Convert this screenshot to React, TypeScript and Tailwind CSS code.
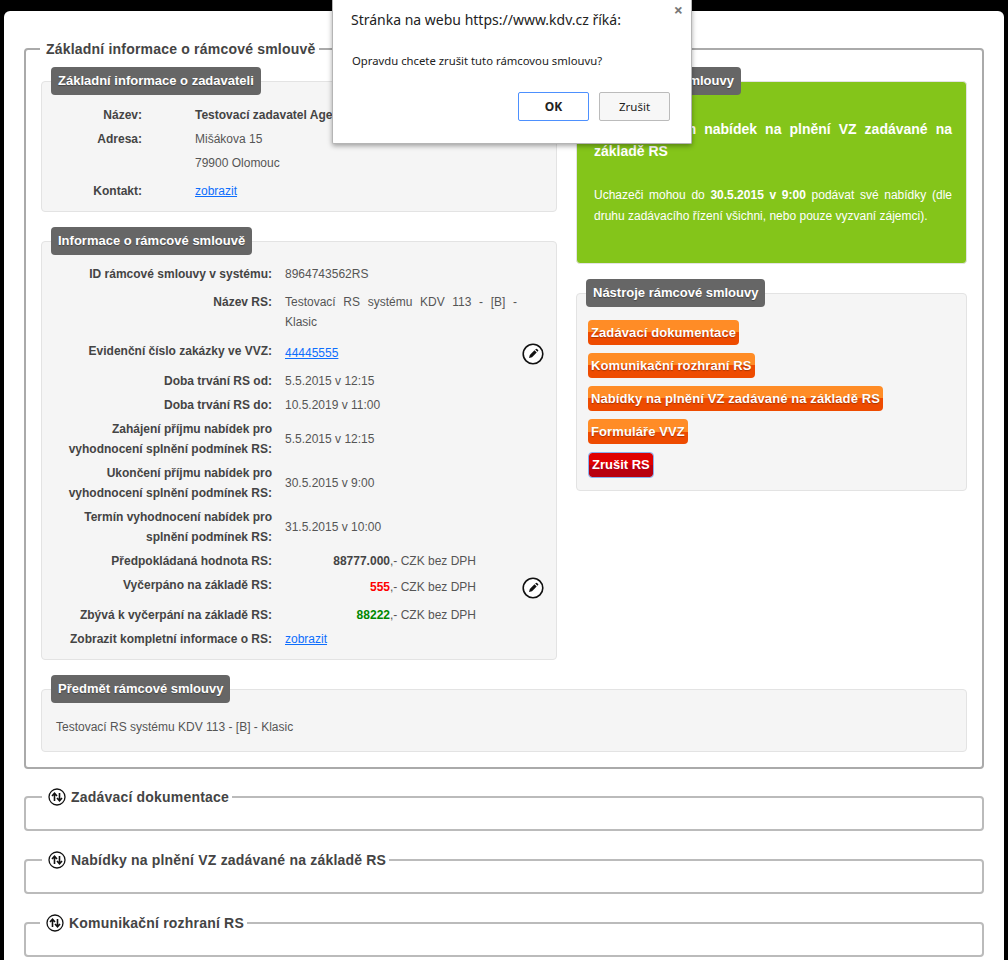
const BTN_ORANGE = 'bg-[linear-gradient(#ff8c26_0,#ff8c26_50%,#ee4b00_50%,#ee4b00_100%)]';

function PencilIcon() {
  return (
    <svg width="22" height="22" viewBox="0 0 22 22" className="block">
      <circle cx="11" cy="11" r="9.8" fill="#fff" stroke="#111" strokeWidth="1.6" />
      <path d="M7 15l.8-3 4.7-4.7 2.2 2.2L10 14.2z" fill="#111" />
      <path d="M13.2 6.6l.7-.7a.8.8 0 0 1 1.1 0l1.1 1.1a.8.8 0 0 1 0 1.1l-.7.7z" fill="#111" />
    </svg>
  );
}

function ToggleIcon() {
  return (
    <svg width="18" height="18" viewBox="0 0 18 18" className="block shrink-0">
      <circle cx="9" cy="9" r="8" fill="#fff" stroke="#111" strokeWidth="1.3" />
      <path d="M6.5 13V5.5M4 8l2.5-2.7L9 8" fill="none" stroke="#111" strokeWidth="1.6" />
      <path d="M11.5 5v7.5M9 10l2.5 2.7L14 10" fill="none" stroke="#111" strokeWidth="1.6" />
    </svg>
  );
}

function PanelTitle({ children }: { children: React.ReactNode }) {
  return (
    <div className="-mt-[15px] ml-[9px] h-[28px] w-fit rounded-[4px] bg-[#666] px-[7px] text-[13px] leading-[27px] font-bold text-white [text-shadow:0_1px_1px_rgba(0,0,0,0.35)]">
      {children}
    </div>
  );
}

function Panel({ title, children, className }: { title: string; children: React.ReactNode; className: string }) {
  return (
    <div className={`rounded-[4px] border border-[#e3e3e3] bg-[#f5f5f5] ${className}`}>
      <PanelTitle>{title}</PanelTitle>
      {children}
    </div>
  );
}

type Row = { label: React.ReactNode; value: React.ReactNode; edit?: boolean; top?: boolean; mt?: string };

const money = (amount: string, color: string) => (
  <span className="block w-[191px] text-right">
    <b className={color}>{amount}</b>,- CZK bez DPH
  </span>
);

const RS_ROWS: Row[] = [
  { label: 'ID rámcové smlouvy v systému:', value: '8964743562RS' },
  {
    label: 'Název RS:',
    value: <span className="block text-justify">Testovací RS systému KDV 113 - [B] - Klasic</span>,
    top: true,
    mt: 'mt-[4px]',
  },
  {
    label: 'Evidenční číslo zakázky ve VVZ:',
    value: <a className="text-[#0d6efd] underline">44445555</a>,
    edit: true,
    mt: 'mt-[5px]',
  },
  { label: 'Doba trvání RS od:', value: '5.5.2015 v 12:15' },
  { label: 'Doba trvání RS do:', value: '10.5.2019 v 11:00' },
  { label: <>Zahájení příjmu nabídek pro<br />vyhodnocení splnění podmínek RS:</>, value: '5.5.2015 v 12:15' },
  { label: <>Ukončení příjmu nabídek pro<br />vyhodnocení splnění podmínek RS:</>, value: '30.5.2015 v 9:00' },
  { label: <>Termín vyhodnocení nabídek pro<br />splnění podmínek RS:</>, value: '31.5.2015 v 10:00' },
  { label: 'Předpokládaná hodnota RS:', value: money('88777.000', 'text-[#444]') },
  { label: 'Vyčerpáno na základě RS:', value: money('555', 'text-[#f00]'), edit: true },
  { label: 'Zbývá k vyčerpání na základě RS:', value: money('88222', 'text-[#080]') },
  { label: 'Zobrazit kompletní informace o RS:', value: <a className="text-[#0d6efd] underline">zobrazit</a> },
];

const TOOLS = [
  'Zadávací dokumentace',
  'Komunikační rozhraní RS',
  'Nabídky na plnění VZ zadávané na základě RS',
  'Formuláře VVZ',
];

function CollapsedBox({ title, legendClass, spacing }: { title: string; legendClass: string; spacing: string }) {
  return (
    <fieldset className={`h-[44px] rounded-[4px] border-2 border-[#bbb] ${spacing}`}>
      <legend className={`${legendClass} flex items-center gap-[5px] pr-[3px] pl-[6px] text-[14px] leading-[20px] font-bold tracking-[0.2px] text-[#444]`}>
        <ToggleIcon />
        {title}
      </legend>
    </fieldset>
  );
}

export default function App() {
  return (
    <div className="relative h-[960px] overflow-hidden bg-black pt-[11px] pr-[4px] pl-[4px] text-[12px] leading-[20px] text-[#444] [font-family:'Liberation_Sans',Arial,sans-serif]">
      <div className="h-full rounded-t-[6px] bg-white px-[20px] pt-[28px]">
        <fieldset className="rounded-[4px] border-2 border-[#aaa] px-[15px] pb-[15px]">
          <legend className="-ml-[1px] pr-[4px] pl-[6px] text-[14px] leading-[20px] font-bold tracking-[0.2px] text-[#444]">
            Základní informace o rámcové smlouvě
          </legend>

          <div className="mt-[22px] grid grid-cols-[516px_391px] gap-x-[19px]">
            <div>
              <Panel title="Základní informace o zadavateli" className="h-[131px]">
                <div className="mt-[10px] grid grid-cols-[100px_1fr] gap-x-[53px] gap-y-[4px]">
                  <b className="text-right">Název:</b>
                  <b className="whitespace-nowrap">Testovací zadavatel Agentura</b>
                  <b className="text-right">Adresa:</b>
                  <span className="text-[#555]">Mišákova 15</span>
                  <span />
                  <span className="text-[#555]">79900 Olomouc</span>
                  <b className="mt-[4px] text-right">Kontakt:</b>
                  <a className="mt-[4px] text-[#0d6efd] underline">zobrazit</a>
                </div>
              </Panel>

              <Panel title="Informace o rámcové smlouvě" className="mt-[29px] pb-[10px]">
                <div className="mt-[9px] flex flex-col gap-y-[4px]">
                  {RS_ROWS.map((row, i) => (
                    <div key={i} className={`relative grid grid-cols-[230px_232px] items-center gap-x-[13px] ${row.mt ?? ''} ${row.edit ? 'h-[26px]' : ''}`}>
                      <b className={`text-right ${row.edit || row.top ? 'self-start' : ''}`}>{row.label}</b>
                      <div className={`text-[#555] ${row.edit ? 'self-start pt-[2px]' : ''}`}>{row.value}</div>
                      {row.edit && (
                        <span className="absolute top-[2px] right-[12px]">
                          <PencilIcon />
                        </span>
                      )}
                    </div>
                  ))}
                </div>
              </Panel>
            </div>

            <div>
              <div className="h-[183px] rounded-[4px] border border-[#e3e3e3] bg-[#84c51a] text-white">
                <PanelTitle>Stav rámcové smlouvy</PanelTitle>
                <div className="pr-[14px] pl-[17px]">
                  <p className="mt-[23px] text-justify text-[14px] leading-[22px] font-bold text-white">
                    Probíhá příjem nabídek na plnění VZ zadávané na základě RS
                  </p>
                  <p className="mt-[23px] text-justify leading-[21px]">
                    Uchazeči mohou do <b>30.5.2015 v 9:00</b> podávat své nabídky (dle druhu zadávacího řízení všichni, nebo pouze vyzvaní zájemci).
                  </p>
                </div>
              </div>

              <Panel title="Nástroje rámcové smlouvy" className="mt-[29px] pb-[12px]">
                <div className="mt-[13px] flex flex-col items-start gap-y-[8px] pl-[11px]">
                  {TOOLS.map((tool) => (
                    <button key={tool} className={`h-[25px] rounded-[4px] px-[3px] text-[13px] leading-[25px] font-bold tracking-[0.1px] text-white [text-shadow:0_1px_1px_rgba(120,40,0,0.6)] ${BTN_ORANGE}`}>
                      {tool}
                    </button>
                  ))}
                  <button className="h-[26px] rounded-[4px] border border-[#8ab0ee] bg-[linear-gradient(#e00000_0,#e00000_50%,#b80010_50%,#b80010_100%)] bg-clip-padding px-[3px] text-[13px] leading-[22px] font-bold text-white">
                    Zrušit RS
                  </button>
                </div>
              </Panel>
            </div>
          </div>

          <Panel title="Předmět rámcové smlouvy" className="mt-[29px] pb-[14px]">
            <div className="mt-[14px] pl-[14px] text-[#555]">Testovací RS systému KDV 113 - [B] - Klasic</div>
          </Panel>
        </fieldset>

        <CollapsedBox title="Zadávací dokumentace" legendClass="ml-[16px]" spacing="mt-[18px]" />
        <CollapsedBox title="Nabídky na plnění VZ zadávané na základě RS" legendClass="ml-[16px]" spacing="mt-[19px]" />
        <CollapsedBox title="Komunikační rozhraní RS" legendClass="ml-[14px]" spacing="mt-[19px]" />
      </div>

      <div className="absolute top-0 left-[332px] h-[144px] w-[360px] rounded-b-[2px] border border-t-0 border-[#b5b5b5] bg-white shadow-[0_2px_5px_rgba(0,0,0,0.35)] [font-family:'Noto_Sans',sans-serif]">
        <div className="absolute top-[2px] right-[8px] text-[16px] leading-[16px] font-bold text-[#777]">×</div>
        <div className="pt-[10px] pl-[18px] text-[14px] leading-[20px] text-[#222]">Stránka na webu https://www.kdv.cz říká:</div>
        <div className="mt-[21px] pl-[19px] text-[11.3px] leading-[20px] text-[#222]">Opravdu chcete zrušit tuto rámcovou smlouvu?</div>
        <div className="mt-[21px] flex justify-end gap-x-[10px] pr-[21px]">
          <button className="h-[29px] w-[71px] rounded-[2px] border border-[#4d90fe] bg-white text-[12px] font-bold text-[#222]">OK</button>
          <button className="h-[29px] w-[71px] rounded-[2px] border border-[#bbb] bg-[#f7f7f7] text-[11.5px] text-[#222]">Zrušit</button>
        </div>
      </div>
    </div>
  );
}
